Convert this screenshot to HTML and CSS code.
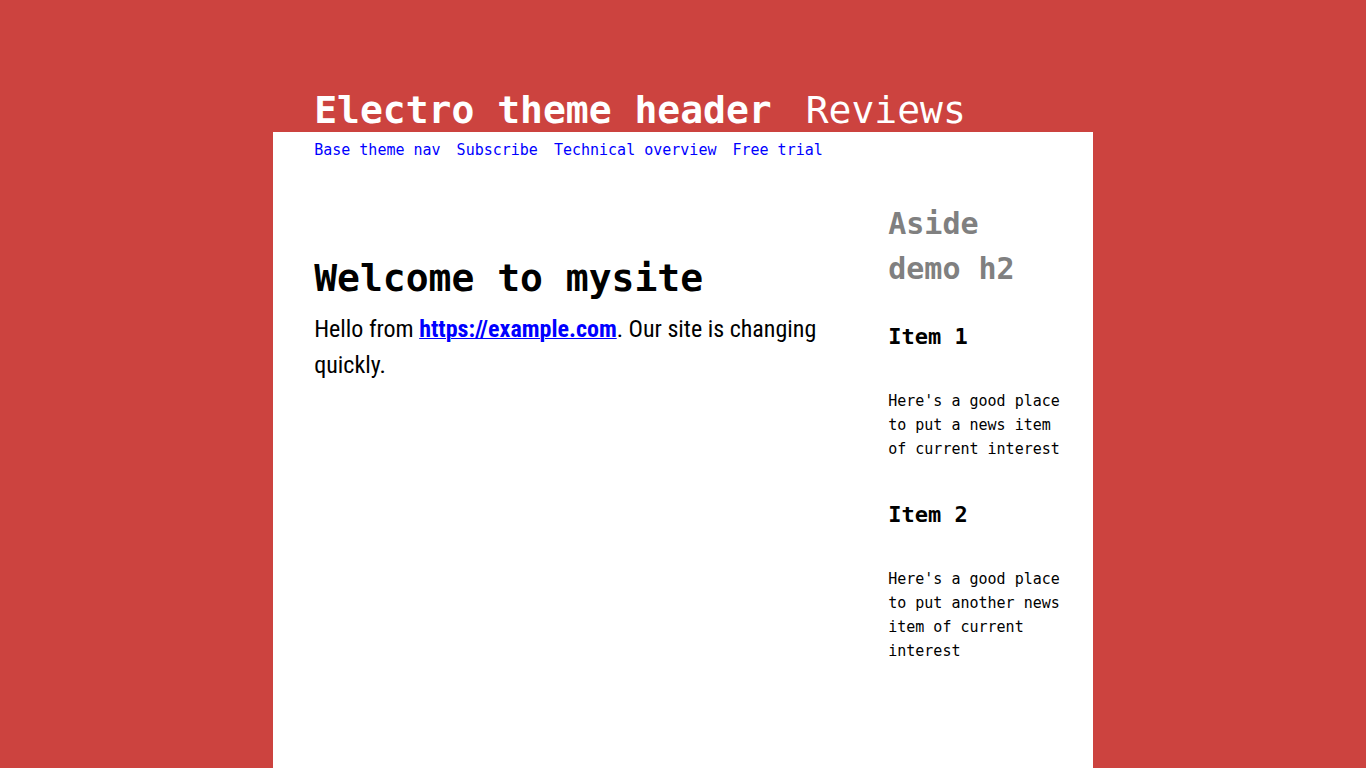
FILE: index.html
```html
<!DOCTYPE html>
<html lang="en">
<head>
<meta charset="utf-8">
<meta name="viewport" content="width=device-width, initial-scale=1">
<title>Welcome to mysite</title>
<link rel="stylesheet" href="styles.css">
</head>
<body>
<div class="page">
  <header class="site-header">
    <strong class="site-title">Electro theme header</strong>
    <a class="site-link" href="#reviews">Reviews</a>
  </header>
  <div class="sheet">
    <nav class="site-nav">
      <a href="#base">Base theme nav</a>
      <a href="#subscribe">Subscribe</a>
      <a href="#technical">Technical overview</a>
      <a href="#trial">Free trial</a>
    </nav>
    <div class="columns">
      <main class="content">
        <h1>Welcome to mysite</h1>
        <p>Hello from <a href="https://example.com">https://example.com</a>. Our site is changing quickly.</p>
      </main>
      <aside class="sidebar">
        <h2>Aside demo h2</h2>
        <h3>Item 1</h3>
        <p>Here's a good place to put a news item of current interest</p>
        <h3>Item 2</h3>
        <p>Here's a good place to put another news item of current interest</p>
      </aside>
    </div>
  </div>
</div>
</body>
</html>
```

FILE: styles.css
```css
* {
  box-sizing: border-box;
}

body {
  margin: 0;
  background: #cc433f;
  color: #000;
  font-family: "DejaVu Sans Mono", "Liberation Mono", monospace;
  font-size: 15px;
  line-height: 24px;
}

h1, h2, h3, p {
  margin: 0;
}

.page {
  display: flex;
  flex-direction: column;
  width: 60%;
  min-height: 100vh;
  margin: 0 auto;
  padding-top: 88px;
}

.site-header {
  display: flex;
  flex-wrap: wrap;
  gap: 34px;
  padding: 0 5%;
  color: #fff;
  font-size: 38px;
  line-height: 44px;
}

.site-link {
  color: inherit;
  text-decoration: none;
}

.sheet {
  flex: 1;
  padding: 6px 3% 32px 5%;
  background: #fff;
}

.site-nav {
  display: flex;
  flex-wrap: wrap;
  gap: 16px;
}

.site-nav a {
  color: #00f;
  text-decoration: none;
}

.columns {
  display: flex;
  justify-content: space-between;
  gap: 48px;
  padding-top: 39px;
}

.content {
  flex: 1;
  padding-top: 49px;
  font-family: "Roboto Condensed", Roboto, "Liberation Sans", sans-serif;
  font-size: 24px;
  line-height: 36px;
}

.content h1 {
  margin-bottom: 5px;
  font-family: "DejaVu Sans Mono", "Liberation Mono", monospace;
  font-size: 38px;
  line-height: 56px;
}

.content a {
  color: #00f;
  font-weight: 700;
  text-decoration-thickness: 1px;
}

.sidebar {
  flex: 0 0 180px;
}

.sidebar h2 {
  margin-bottom: 28px;
  color: #808080;
  font-size: 30px;
  line-height: 45px;
}

.sidebar h3 {
  margin-bottom: 34px;
  font-size: 22px;
  line-height: 36px;
}

.sidebar p {
  margin-bottom: 36px;
}
```
